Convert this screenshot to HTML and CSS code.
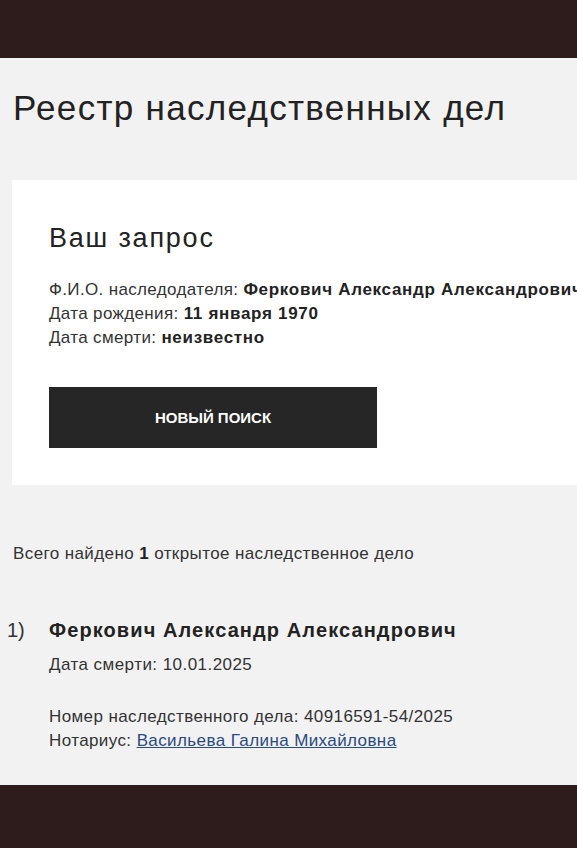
FILE: index.html
```html
<!DOCTYPE html>
<html lang="ru">
<head>
<meta charset="utf-8">
<link rel="stylesheet" href="styles.css">
</head>
<body>
<header class="topbar"></header>
<main class="main">
  <h1 class="title">Реестр наследственных дел</h1>
  <section class="card">
    <h2 class="card-title">Ваш запрос</h2>
    <div class="query">
      <div>Ф.И.О. наследодателя: <b>Феркович Александр Александрович</b></div>
      <div>Дата рождения: <b>11 января 1970</b></div>
      <div>Дата смерти: <b>неизвестно</b></div>
    </div>
    <button class="btn">НОВЫЙ ПОИСК</button>
  </section>
  <p class="summary">Всего найдено <b>1</b> открытое наследственное дело</p>
  <ol class="results">
    <li class="result">
      <span class="num">1)</span>
      <div class="result-body">
        <div class="result-name">Феркович Александр Александрович</div>
        <div class="result-line">Дата смерти: 10.01.2025</div>
        <div class="result-info">
          <div>Номер наследственного дела: 40916591-54/2025</div>
          <div>Нотариус: <a href="#" class="link">Васильева Галина Михайловна</a></div>
        </div>
      </div>
    </li>
  </ol>
</main>
<footer class="footer"></footer>
</body>
</html>
```
FILE: styles.css
```css
html, body {
  margin: 0;
  padding: 0;
}
body {
  background: #f2f2f2;
  font-family: "Liberation Sans", Arial, sans-serif;
  color: #2a2a2a;
  overflow: hidden;
  width: 577px;
  height: 848px;
}
.topbar {
  height: 58px;
  background: #2e1b1b;
}
.main {
  padding: 0 0 0 12px;
  height: 727px;
  overflow: hidden;
}
.title {
  margin: 0;
  padding: 28px 0 0 1px;
  font-size: 35px;
  font-weight: 400;
  line-height: 44px;
  height: 94px;
  letter-spacing: 1.3px;
  color: #222;
}
.card {
  background: #fff;
  margin-right: -60px;
  padding: 42px 0 38px 37px;
  height: 225px;
}
.card-title {
  margin: 0;
  font-size: 27px;
  font-weight: 400;
  line-height: 32px;
  letter-spacing: 1.8px;
  color: #222;
}
.query {
  margin-top: 24px;
  font-size: 17px;
  line-height: 24px;
  letter-spacing: 0.35px;
  white-space: nowrap;
  color: #333;
}
.query b {
  font-weight: 700;
  letter-spacing: 0.7px;
  color: #222;
}
.btn {
  display: block;
  margin-top: 37px;
  width: 328px;
  height: 61px;
  background: #262626;
  color: #fff;
  border: 0;
  font-family: "Liberation Sans", Arial, sans-serif;
  font-weight: 700;
  font-size: 15px;
  letter-spacing: 0;
}
.summary {
  margin: 0;
  padding: 57px 0 0 1px;
  font-size: 17px;
  line-height: 24px;
  letter-spacing: 0.4px;
  color: #333;
}
.summary b {
  color: #222;
}
.results {
  list-style: none;
  margin: 0;
  padding: 50px 0 0 0;
}
.result {
  display: flex;
  margin-left: -5px;
}
.num {
  width: 42px;
  font-size: 20px;
  line-height: 28px;
  color: #333;
}
.result-name {
  font-size: 20px;
  font-weight: 700;
  line-height: 28px;
  letter-spacing: 1.1px;
  color: #222;
}
.result-line {
  margin-top: 9px;
  font-size: 17px;
  line-height: 24px;
  letter-spacing: 0.45px;
  color: #333;
}
.result-info {
  margin-top: 28px;
  font-size: 17px;
  line-height: 24px;
  letter-spacing: 0.4px;
  color: #333;
}
.link {
  color: #2b4a7e;
}
.footer {
  height: 63px;
  background: #2e1b1b;
}
```
